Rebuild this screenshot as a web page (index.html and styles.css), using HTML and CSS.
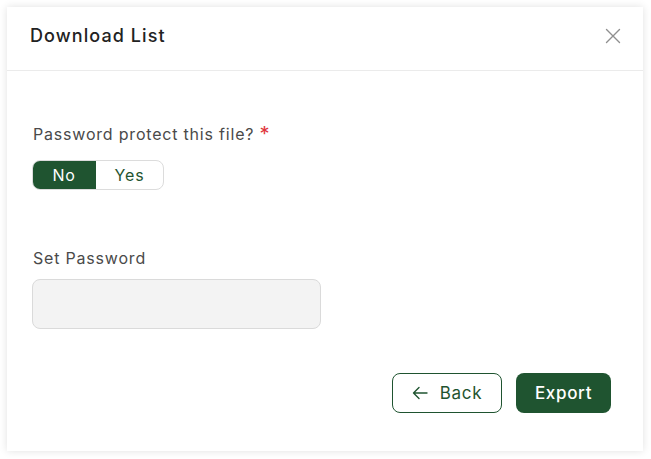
FILE: index.html
```html
<!DOCTYPE html>
<html>
<head>
<meta charset="utf-8">
<link rel="stylesheet" href="styles.css">
</head>
<body>
<div class="modal">
  <div class="modal-header">
    <h2 class="title">Download List</h2>
    <button class="close" aria-label="Close">
      <svg width="16" height="16" viewBox="0 0 16 16"><path d="M1.5 1.5 L14.5 14.5 M14.5 1.5 L1.5 14.5" stroke="#8f8f8f" stroke-width="1.4" fill="none" stroke-linecap="round"/></svg>
    </button>
  </div>
  <div class="modal-body">
    <div class="field">
      <label class="label">Password protect this file? <span class="req">*</span></label>
      <div class="toggle">
        <span class="opt active">No</span>
        <span class="opt">Yes</span>
      </div>
    </div>
    <div class="field field-pw">
      <label class="label">Set Password</label>
      <div class="input"></div>
    </div>
    <div class="footer">
      <button class="btn btn-outline">
        <svg width="16" height="14" viewBox="0 0 16 14"><path d="M15 7 H1.5 M7 1.5 L1.5 7 L7 12.5" stroke="#1f5430" stroke-width="1.4" fill="none" stroke-linecap="round" stroke-linejoin="round"/></svg>
        <span>Back</span>
      </button>
      <button class="btn btn-primary">Export</button>
    </div>
  </div>
</div>
</body>
</html>
```
FILE: styles.css
```css
* { box-sizing: border-box; }
html, body { margin: 0; padding: 0; background: #fff; }
body {
  padding: 7px;
  font-family: "Inter", "Open Sans", sans-serif;
  color: #444;
  letter-spacing: 0.05em;
}
.modal {
  width: 636px;
  height: 444px;
  background: #fff;
  box-shadow: 0 0 8px rgba(0,0,0,0.12);
  display: flex;
  flex-direction: column;
}
.modal-header {
  height: 64px;
  border-bottom: 1px solid #ebebeb;
  display: flex;
  align-items: center;
  justify-content: space-between;
  padding: 0 22px 6px 23px;
}
.title {
  margin: 0;
  font-size: 18px;
  font-weight: 500;
  color: #222;
  letter-spacing: 0.06em;
}
.close {
  border: 0;
  background: none;
  padding: 0;
  width: 16px;
  height: 16px;
  display: flex;
}
.modal-body {
  padding: 51px 32px 0 25px;
  display: flex;
  flex-direction: column;
}
.field { display: flex; flex-direction: column; }
.label {
  font-size: 16px;
  line-height: 24px;
  color: #4a4a4a;
  padding-left: 1px;
}
.req {
  color: #e0353b;
  font-size: 20px;
  line-height: 0;
  vertical-align: -1px;
}
.toggle {
  margin-top: 14px;
  width: 132px;
  height: 30px;
  display: flex;
  border: 1px solid #dcdcdc;
  border-radius: 8px;
  overflow: hidden;
}
.opt {
  flex: 1;
  display: flex;
  align-items: center;
  justify-content: center;
  font-size: 16px;
  color: #1f5430;
}
.opt.active {
  flex: 0 0 64px;
  background: #1f5430;
  color: #fff;
  margin: -1px 0 -1px -1px;
}
.field-pw { margin-top: 56px; }
.field-pw .input {
  margin-top: 9px;
  width: 289px;
  height: 50px;
  background: #f3f3f3;
  border: 1px solid #dadada;
  border-radius: 8px;
}
.footer {
  margin-top: 44px;
  display: flex;
  justify-content: flex-end;
  gap: 14px;
}
.btn {
  height: 40px;
  border-radius: 8px;
  font-family: inherit;
  font-size: 17px;
  letter-spacing: 0.04em;
  display: flex;
  align-items: center;
  justify-content: center;
  gap: 12px;
}
.btn-outline {
  width: 110px;
  background: #fff;
  border: 1px solid #1f5430;
  color: #1f5430;
}
.btn-primary {
  width: 95px;
  background: #1f5430;
  border: 0;
  color: #fff;
  font-weight: 500;
}
```
